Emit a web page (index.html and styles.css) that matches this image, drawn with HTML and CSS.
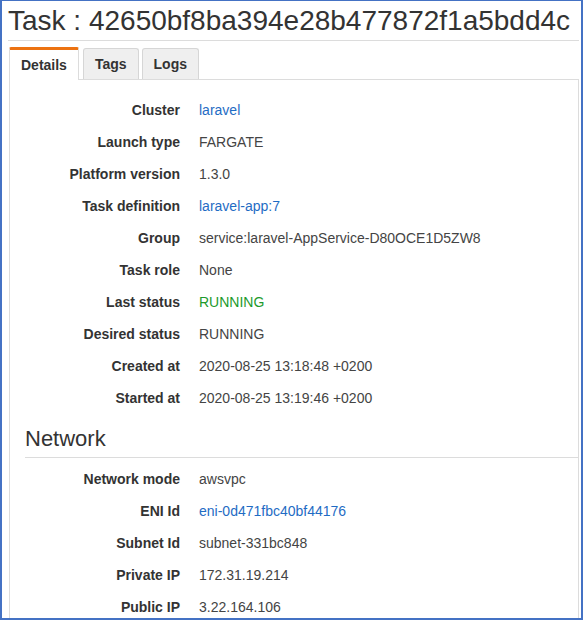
FILE: index.html
```html
<!DOCTYPE html>
<html lang="en">
<head>
<meta charset="utf-8">
<title>Task details</title>
<link rel="stylesheet" href="styles.css">
</head>
<body>
<div class="frame">
  <h1 class="title">Task : 42650bf8ba394e28b477872f1a5bdd4c</h1>
  <div class="tabs">
    <div class="tab active">Details</div>
    <div class="tab">Tags</div>
    <div class="tab">Logs</div>
  </div>
  <div class="panel">
    <dl class="props">
      <dt>Cluster</dt><dd><a href="#" class="link">laravel</a></dd>
      <dt>Launch type</dt><dd>FARGATE</dd>
      <dt>Platform version</dt><dd>1.3.0</dd>
      <dt>Task definition</dt><dd><a href="#" class="link">laravel-app:7</a></dd>
      <dt>Group</dt><dd>service:laravel-AppService-D80OCE1D5ZW8</dd>
      <dt>Task role</dt><dd>None</dd>
      <dt>Last status</dt><dd class="ok">RUNNING</dd>
      <dt>Desired status</dt><dd>RUNNING</dd>
      <dt>Created at</dt><dd>2020-08-25 13:18:48 +0200</dd>
      <dt>Started at</dt><dd>2020-08-25 13:19:46 +0200</dd>
    </dl>
    <h2 class="section">Network</h2>
    <dl class="props">
      <dt>Network mode</dt><dd>awsvpc</dd>
      <dt>ENI Id</dt><dd><a href="#" class="link">eni-0d471fbc40bf44176</a></dd>
      <dt>Subnet Id</dt><dd>subnet-331bc848</dd>
      <dt>Private IP</dt><dd>172.31.19.214</dd>
      <dt>Public IP</dt><dd>3.22.164.106</dd>
    </dl>
  </div>
</div>
</body>
</html>
```

FILE: styles.css
```css
html, body {
  margin: 0;
  padding: 0;
  background: #fff;
}

body {
  font-family: "Liberation Sans", Arial, sans-serif;
  color: #333;
}

.frame {
  box-sizing: border-box;
  width: 583px;
  height: 620px;
  overflow: hidden;
  border: 2px solid #4472c4;
  border-top-width: 1px;
  padding: 0 2px 0 6px;
  background: #fff;
}

.title {
  margin: 4px 0 0;
  padding: 0 0 3px 0;
  font-size: 28px;
  line-height: 32px;
  font-weight: normal;
  color: #333;
  border-bottom: 1px solid #dcdcdc;
  white-space: nowrap;
}

/* tab strip */
.tabs {
  display: flex;
  align-items: flex-end;
  margin: 6px 0 0 1px;
  border-bottom: 1px solid #dcdcdc;
  height: 32px;
}

.tab {
  box-sizing: border-box;
  height: 31px;
  padding: 0 11px;
  margin-right: 3px;
  font-size: 14px;
  font-weight: bold;
  line-height: 31px;
  color: #333;
  background: #efefef;
  border: 1px solid #d6d6d6;
  border-bottom: none;
  border-radius: 3px 3px 0 0;
}

.tab.active {
  height: 33px;
  margin-bottom: -1px;
  background: #fff;
  border-color: #dcdcdc;
  border-top: 3px solid #ec7211;
  border-radius: 2px 2px 0 0;
  line-height: 31px;
  margin-right: 4px;
}

/* details panel */
.panel {
  margin-left: 1px;
  padding-top: 14px;
  border-left: 1px solid #dcdcdc;
  border-right: 1px solid #dcdcdc;
  min-height: 560px;
}

.props {
  display: grid;
  grid-template-columns: 170px 1fr;
  column-gap: 19px;
  margin: 0;
  font-size: 14px;
  line-height: 32px;
}

.props dt {
  text-align: right;
  font-weight: bold;
  color: #333;
  white-space: nowrap;
}

.props dd {
  margin: 0;
  color: #444;
  white-space: nowrap;
}

.link {
  color: #1f6cc4;
  text-decoration: none;
}

.props dd.ok {
  color: #1d9a2c;
}

.section {
  margin: 12px 0 5px 15px;
  padding-bottom: 5px;
  font-size: 22px;
  line-height: 26px;
  font-weight: normal;
  color: #333;
  border-bottom: 1px solid #dcdcdc;
}
```
